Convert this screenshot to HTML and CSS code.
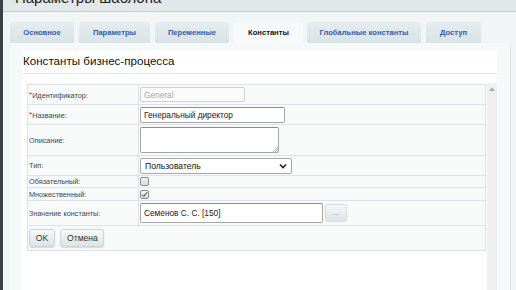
FILE: index.html
```html
<!DOCTYPE html>
<html lang="ru">

<head>
    <meta charset="UTF-8">
    <meta name="viewport" content="width=device-width, initial-scale=1.0">
    <title>Параметры шаблона</title>
    <link rel="stylesheet" href="styles.css">
</head>

<body>
    <div class="window">
        <div class="titlebar">
            <span class="title">Параметры шаблона</span>
            <span class="close">×</span>
        </div>

        <div class="dialog">
            <ul class="tabs">
                <li class="tab tab-main">Основное</li>
                <li class="tab tab-params">Параметры</li>
                <li class="tab tab-vars">Переменные</li>
                <li class="tab tab-const active">Константы</li>
                <li class="tab tab-global">Глобальные константы</li>
                <li class="tab tab-access">Доступ</li>
            </ul>

            <div class="panel">
                <div class="panel-head">Константы бизнес-процесса</div>

                <div class="panel-body">
                    <div class="scroll-content">
                        <table class="form-table">
                            <tr class="row-20">
                                <td class="label"><span class="req">*</span>Идентификатор:</td>
                                <td class="value">
                                    <div class="input input-id disabled">General</div>
                                </td>
                            </tr>
                            <tr class="row-20">
                                <td class="label"><span class="req">*</span>Название:</td>
                                <td class="value">
                                    <div class="input input-name">Генеральный директор</div>
                                </td>
                            </tr>
                            <tr class="row-31">
                                <td class="label">Описание:</td>
                                <td class="value">
                                    <div class="textarea">
                                        <svg class="grip" width="6" height="6" viewBox="0 0 6 6">
                                            <path d="M1 6L6 1M3 6L6 3M5 6L6 5" stroke="#9a9a9a" stroke-width="0.8" />
                                        </svg>
                                    </div>
                                </td>
                            </tr>
                            <tr class="row-20">
                                <td class="label">Тип:</td>
                                <td class="value">
                                    <div class="select">
                                        <span>Пользователь</span>
                                        <svg width="8" height="6" viewBox="0 0 8 6">
                                            <path d="M1 1.5L4 4.5L7 1.5" fill="none" stroke="#222" stroke-width="1.6" />
                                        </svg>
                                    </div>
                                </td>
                            </tr>
                            <tr class="row-12">
                                <td class="label">Обязательный:</td>
                                <td class="value"><span class="checkbox"></span></td>
                            </tr>
                            <tr class="row-13">
                                <td class="label">Множественный:</td>
                                <td class="value">
                                    <span class="checkbox">
                                        <svg width="7" height="7" viewBox="0 0 7 7">
                                            <path d="M1 3.6L2.8 5.4L6 1.2" fill="none" stroke="#333" stroke-width="1" />
                                        </svg>
                                    </span>
                                </td>
                            </tr>
                            <tr class="row-25">
                                <td class="label">Значение константы:</td>
                                <td class="value">
                                    <div class="value-line">
                                        <div class="input input-user">Семенов С. С. [150]</div>
                                        <span class="btn-dots">...</span>
                                    </div>
                                </td>
                            </tr>
                            <tr class="row-25">
                                <td colspan="2" class="buttons">
                                    <span class="btn btn-ok">OK</span>
                                    <span class="btn btn-cancel">Отмена</span>
                                </td>
                            </tr>
                        </table>
                    </div>
                    <div class="scrollbar">
                        <svg width="6" height="4" viewBox="0 0 6 4">
                            <path d="M0 4L3 0.5L6 4Z" fill="#a8a8a8" />
                        </svg>
                    </div>
                </div>
            </div>
        </div>
    </div>
</body>

</html>
```

FILE: styles.css
```css
* {
    box-sizing: border-box;
}

body {
    margin: 0;
    font-family: "Liberation Sans", Arial, sans-serif;
    background: #f1f4f6;
}

ul {
    padding: 0;
    margin: 0;
    list-style: none;
}

.window {
    width: 516px;
    height: 290px;
    border-left: 3px solid #3a4046;
    background: #f0f3f5;
    display: flex;
    flex-direction: column;
    overflow: hidden;
}

/* 标题栏 */
.titlebar {
    height: 12px;
    flex-shrink: 0;
    background: #e2e7ea;
    border-bottom: 1px solid #c6ccd0;
    padding-left: 12px;
    display: flex;
    justify-content: space-between;
    overflow: hidden;
}

.titlebar .title {
    font-size: 15px;
    line-height: 15px;
    margin-top: -10px;
    color: #1d2125;
}

.titlebar .close {
    font-size: 10px;
    line-height: 10px;
    margin-top: -7px;
    margin-right: 10px;
    color: #8a9095;
}

.dialog {
    flex: 1;
    display: flex;
    flex-direction: column;
    padding: 10px 5px 0 7px;
    background: #f2f5f6;
}

/* 选项卡 */
.tabs {
    display: flex;
    gap: 5px;
    height: 21px;
    flex-shrink: 0;
}

.tab {
    font-size: 7.6px;
    font-weight: bold;
    color: #2e5ea6;
    background: linear-gradient(#e6ecef, #d9e2e6);
    border-radius: 2px 2px 0 0;
    display: flex;
    align-items: center;
    justify-content: center;
}

.tab.active {
    color: #111;
    background: #f7fafb;
}

.tab-main { width: 64px; }
.tab-params { width: 71px; }
.tab-vars { width: 74px; }
.tab-const { width: 69px; margin-right: -1px; }
.tab-global { width: 114px; }
.tab-access { width: 55px; }

.panel {
    flex: 1;
    width: 501px;
    background: #f6f9fa;
    border-right: 1px solid #e2e9ec;
    padding: 7px 13px 0 12px;
    display: flex;
    flex-direction: column;
}

.panel-head {
    height: 24px;
    flex-shrink: 0;
    background: #fff;
    border-bottom: 1px solid #e3e8ec;
    font-size: 11.6px;
    line-height: 22px;
    padding-left: 1px;
    color: #111;
}

.panel-body {
    flex: 1;
    background: #fff;
    padding-top: 9px;
    display: flex;
}

.scroll-content {
    flex: 1;
    padding: 1px 1px 0 5px;
}

.scrollbar {
    width: 10px;
    background: #f0f0f0;
    display: flex;
    justify-content: center;
    padding-top: 4px;
    align-items: flex-start;
}

/* 表单 */
.form-table {
    width: 459px;
    border-collapse: collapse;
    background: #f8fafa;
    border: 1px solid #dbe2e8;
}

.form-table td {
    padding: 0;
    border-top: 1px solid #dbe2e8;
    border-bottom: 1px solid #dbe2e8;
}

.row-20 td { height: 20px; }
.row-31 td { height: 31px; }
.row-12 td { height: 12px; }
.row-13 td { height: 13px; }
.row-25 td { height: 25px; }

.label {
    width: 111px;
    font-size: 7.3px;
    color: #454545;
    padding-left: 1px !important;
    border-right: 1px solid #dbe2e8;
}

.req {
    color: #d21d1d;
    font-size: 8px;
    vertical-align: 1px;
}

.value {
    padding-left: 1px !important;
    vertical-align: middle;
}

.input {
    height: 16px;
    background: #fff;
    border: 1px solid #a7a7a7;
    border-top-color: #8d8d8d;
    border-radius: 2px;
    font-size: 8.3px;
    color: #1a1a1a;
    padding-left: 3px;
    display: flex;
    align-items: center;
}

.input-id {
    width: 105px;
    height: 15px;
}

.input.disabled {
    border-color: #d0d0d0;
    color: #a8a8a8;
    background: #fbfbfb;
}

.input-name {
    width: 145px;
}

.textarea {
    width: 139px;
    height: 26px;
    background: #fff;
    border: 1px solid #a7a7a7;
    border-top-color: #8d8d8d;
    border-radius: 2px;
    display: flex;
    justify-content: flex-end;
    align-items: flex-end;
}

.grip {
    display: block;
}

.select {
    width: 152px;
    height: 16px;
    background: #fff;
    border: 1px solid #a7a7a7;
    border-radius: 2px;
    font-size: 8.6px;
    color: #111;
    padding: 0 4px 0 4px;
    display: flex;
    align-items: center;
    justify-content: space-between;
}

.checkbox {
    width: 9px;
    height: 9px;
    border: 1px solid #8a8a8a;
    border-radius: 2px;
    background: linear-gradient(#f4f4f4, #dcdcdc);
    display: flex;
    align-items: center;
    justify-content: center;
}

.value-line {
    display: flex;
    align-items: center;
    gap: 2px;
}

.input-user {
    width: 183px;
    height: 20px;
    padding-left: 3px;
    font-size: 8.3px;
}

.btn-dots {
    width: 22px;
    height: 18px;
    border: 1px solid #d3d9dc;
    border-radius: 3px;
    background: linear-gradient(#f6f8f9, #dde3e6);
    font-size: 7px;
    color: #777;
    display: flex;
    align-items: center;
    justify-content: center;
    padding-bottom: 2px;
}

.buttons {
    padding-left: 1px !important;
}

.btn {
    display: inline-flex;
    align-items: center;
    justify-content: center;
    height: 18px;
    vertical-align: middle;
    border: 1px solid #cdd3d6;
    border-radius: 3px;
    background: linear-gradient(#f7f9fa, #dde3e5);
    box-shadow: 0 1px 1px rgba(0, 0, 0, 0.12);
    font-size: 8.6px;
    color: #333;
    padding-bottom: 1px;
}

.btn-ok {
    width: 26px;
}

.btn-cancel {
    width: 44px;
    margin-left: 1px;
}
```
